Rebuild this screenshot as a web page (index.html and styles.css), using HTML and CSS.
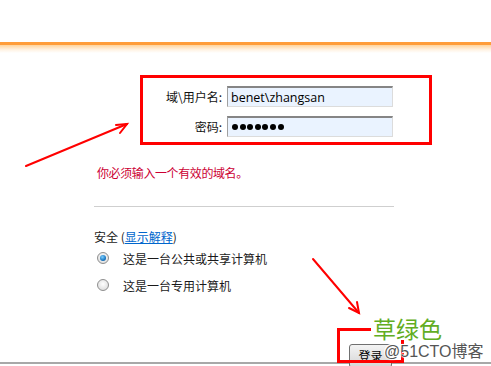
FILE: index.html
```html
<!DOCTYPE html>
<html lang="zh-CN">
<head>
<meta charset="utf-8">
<title>登录</title>
<link rel="stylesheet" href="styles.css">
</head>
<body>
<div class="page">
  <div class="top"></div>
  <div class="bar"></div>
  <div class="glow"></div>

  <div class="login-box">
    <label class="lbl" for="user">域\用户名:</label>
    <input class="field" id="user" value="benet\zhangsan">
    <label class="lbl">密码:</label>
    <div class="field pw"><span class="dot"></span><span class="dot"></span><span class="dot"></span><span class="dot"></span><span class="dot"></span><span class="dot"></span><span class="dot"></span></div>
  </div>

  <p class="error">你必须输入一个有效的域名。</p>
  <div class="rule"></div>

  <div class="security">安全 (<a class="link" href="#">显示解释</a>)</div>
  <div class="radio-row first"><span class="radio checked"></span><span>这是一台公共或共享计算机</span></div>
  <div class="radio-row"><span class="radio"></span><span>这是一台专用计算机</span></div>

  <div class="footer"><button class="btn">登录</button></div>

  <svg class="arrows" width="491" height="366" viewBox="0 0 491 366">
    <g stroke="#ff0000" stroke-width="2" fill="none" stroke-linecap="round">
      <path d="M26 166 L127 124"/>
      <path d="M116 125 L127 124 L120 133"/>
      <path d="M313 259 L359 313"/>
      <path d="M349 308 L359 313 L357 302"/>
    </g>
  </svg>
  <div class="mark-box"></div>
  <div class="green">草绿色</div>
  <div class="watermark">@51CTO博客</div>
</div>
</body>
</html>
```

FILE: styles.css
```css
html, body {
  margin: 0;
  padding: 0;
  background: #fff;
}
.page {
  position: relative;
  width: 491px;
  height: 366px;
  overflow: hidden;
  font-family: "Noto Sans CJK SC", "Noto Sans", sans-serif;
  font-size: 12px;
  color: #1a1a1a;
}
.top { height: 42px; }
.bar { height: 3px; background: #ff9d3a; }
.glow {
  height: 8px;
  background: linear-gradient(#ffd49c, #fff3e4 60%, #ffffff);
}
.login-box {
  margin: 22px 0 0 140px;
  width: 292px;
  height: 70px;
  border: 3px solid #ff0000;
  padding: 8px 0 5px 0;
  box-sizing: border-box;
  display: grid;
  grid-template-columns: 79px 166px;
  grid-template-rows: 21px 21px;
  column-gap: 5px;
  row-gap: 9px;
  align-items: center;
}
.lbl {
  text-align: right;
  line-height: 21px;
  color: #111;
}
.field {
  box-sizing: border-box;
  width: 166px;
  height: 21px;
  margin: 0;
  border-style: solid;
  border-width: 2px 1px 1px 1px;
  border-color: #858585 #dcdcdc #dcdcdc #a0a0a0;
  background: #eaf3ff;
  padding: 0 0 0 3px;
  font-family: "Open Sans", "Noto Sans", sans-serif;
  font-size: 12.5px;
  color: #000;
  outline: none;
}
.pw {
  display: flex;
  align-items: center;
  gap: 1.6px;
  padding-left: 4px;
}
.dot {
  width: 6px;
  height: 6px;
  border-radius: 50%;
  background: #000;
}
.error {
  margin: 20px 0 0 97px;
  line-height: 16px;
  color: #cc0033;
  letter-spacing: -0.4px;
}
.rule {
  margin: 25px 0 0 94px;
  width: 300px;
  height: 1px;
  background: #cfcfcf;
}
.security {
  margin: 22px 0 0 94px;
  line-height: 16px;
}
.link {
  color: #0066cc;
  text-decoration: underline;
}
.radio-row {
  display: flex;
  align-items: center;
  height: 20px;
  margin: 7px 0 0 97px;
  gap: 14px;
}
.radio-row.first { margin-top: 3px; }
.radio {
  box-sizing: border-box;
  width: 12px;
  height: 12px;
  border-radius: 50%;
  border: 1px solid #8e8e8e;
  background: radial-gradient(circle at 50% 40%, #ffffff, #e2e2e2 70%, #cfcfcf);
  display: flex;
  align-items: center;
  justify-content: center;
}
.radio.checked::after {
  content: "";
  width: 6px;
  height: 6px;
  border-radius: 50%;
  background: radial-gradient(circle at 40% 35%, #7fd0ff, #1a78c2 60%, #0d4f8a);
}
.footer {
  margin-top: 49px;
  height: 18px;
  padding-left: 349px;
  border-bottom: 2px solid #a8a8a8;
  display: flex;
  align-items: flex-start;
}
.btn {
  width: 43px;
  height: 24px;
  margin: 0;
  padding: 0;
  border: 1px solid #707070;
  border-radius: 3px;
  background: linear-gradient(#f4f4f4, #e4e4e4 50%, #d6d6d6);
  font-family: "Noto Sans CJK SC", sans-serif;
  font-size: 12px;
  color: #000;
  line-height: 20px;
  position: relative;
}
.arrows {
  position: absolute;
  left: 0;
  top: 0;
  pointer-events: none;
}
.mark-box {
  position: absolute;
  left: 337px;
  top: 328px;
  width: 67px;
  height: 35px;
  box-sizing: border-box;
  border: 3px solid #ff0000;
}
.green {
  position: absolute;
  left: 371px;
  top: 317px;
  padding: 0 2px;
  background: #fff;
  font-family: "Noto Sans CJK SC", sans-serif;
  font-size: 23px;
  line-height: 23px;
  color: #62ad22;
}
.watermark {
  position: absolute;
  left: 384px;
  top: 343px;
  font-family: "Liberation Sans", "Noto Sans CJK SC", sans-serif;
  font-size: 16px;
  line-height: 17px;
  color: #555;
  text-shadow: 0 0 2px #fff, 0 0 2px #fff, 1px 1px 0 #fff, -1px -1px 0 #fff;
}
```
